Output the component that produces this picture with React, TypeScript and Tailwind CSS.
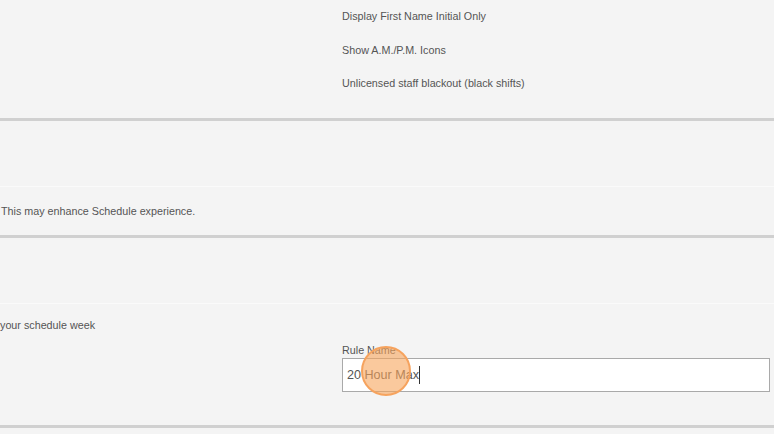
import { useState } from "react";

const font = { fontFamily: '"Liberation Sans", Arial, sans-serif' };

function Section({ children }: { children: React.ReactNode }) {
  return <section className="border-b-[3px] border-[#d0d0d0] bg-[#f4f4f4]">{children}</section>;
}

export default function App() {
  const [ruleName, setRuleName] = useState("20 Hour Max");

  return (
    <main className="h-[434px] w-[774px] overflow-hidden bg-[#f4f4f4] text-[10.75px] text-[#555]" style={font}>
      <Section>
        <div className="flex flex-col pb-[18px] pl-[342px]">
          <div className="flex h-[33px] items-center">Display First Name Initial Only</div>
          <div className="flex h-[34px] items-center">Show A.M./P.M. Icons</div>
          <div className="flex h-[33px] items-center">Unlicensed staff blackout (black shifts)</div>
        </div>
      </Section>

      <Section>
        <div className="h-[66px] border-b border-[#fafafa]" />
        <div className="flex h-[48px] items-center pl-[1px]">This may enhance Schedule experience.</div>
      </Section>

      <Section>
        <div className="h-[66px] border-b border-[#fafafa]" />
        <div className="flex h-[121px] flex-col">
          <div className="flex h-[39px] items-center pt-[3px]">your schedule week</div>
          <div className="flex flex-col pl-[342px]">
            <label className="mb-[1px] leading-[14px]">Rule Name</label>
            <div className="relative w-[428px]">
              <input
                value={ruleName}
                onChange={(e) => setRuleName(e.target.value)}
                className="h-[34px] w-full border border-[#a9a9a9] bg-white px-[4px] text-[12.6px] text-[#555] outline-none"
                style={font}
              />
              <span className="absolute left-[77px] top-[8px] h-[18px] w-px bg-[#333]" />
              <span className="pointer-events-none absolute left-[19px] top-[-12px] h-[50px] w-[50px] rounded-full border-2 border-[#f6a35e] bg-[#f7a55c]/60" />
            </div>
          </div>
        </div>
      </Section>
    </main>
  );
}
